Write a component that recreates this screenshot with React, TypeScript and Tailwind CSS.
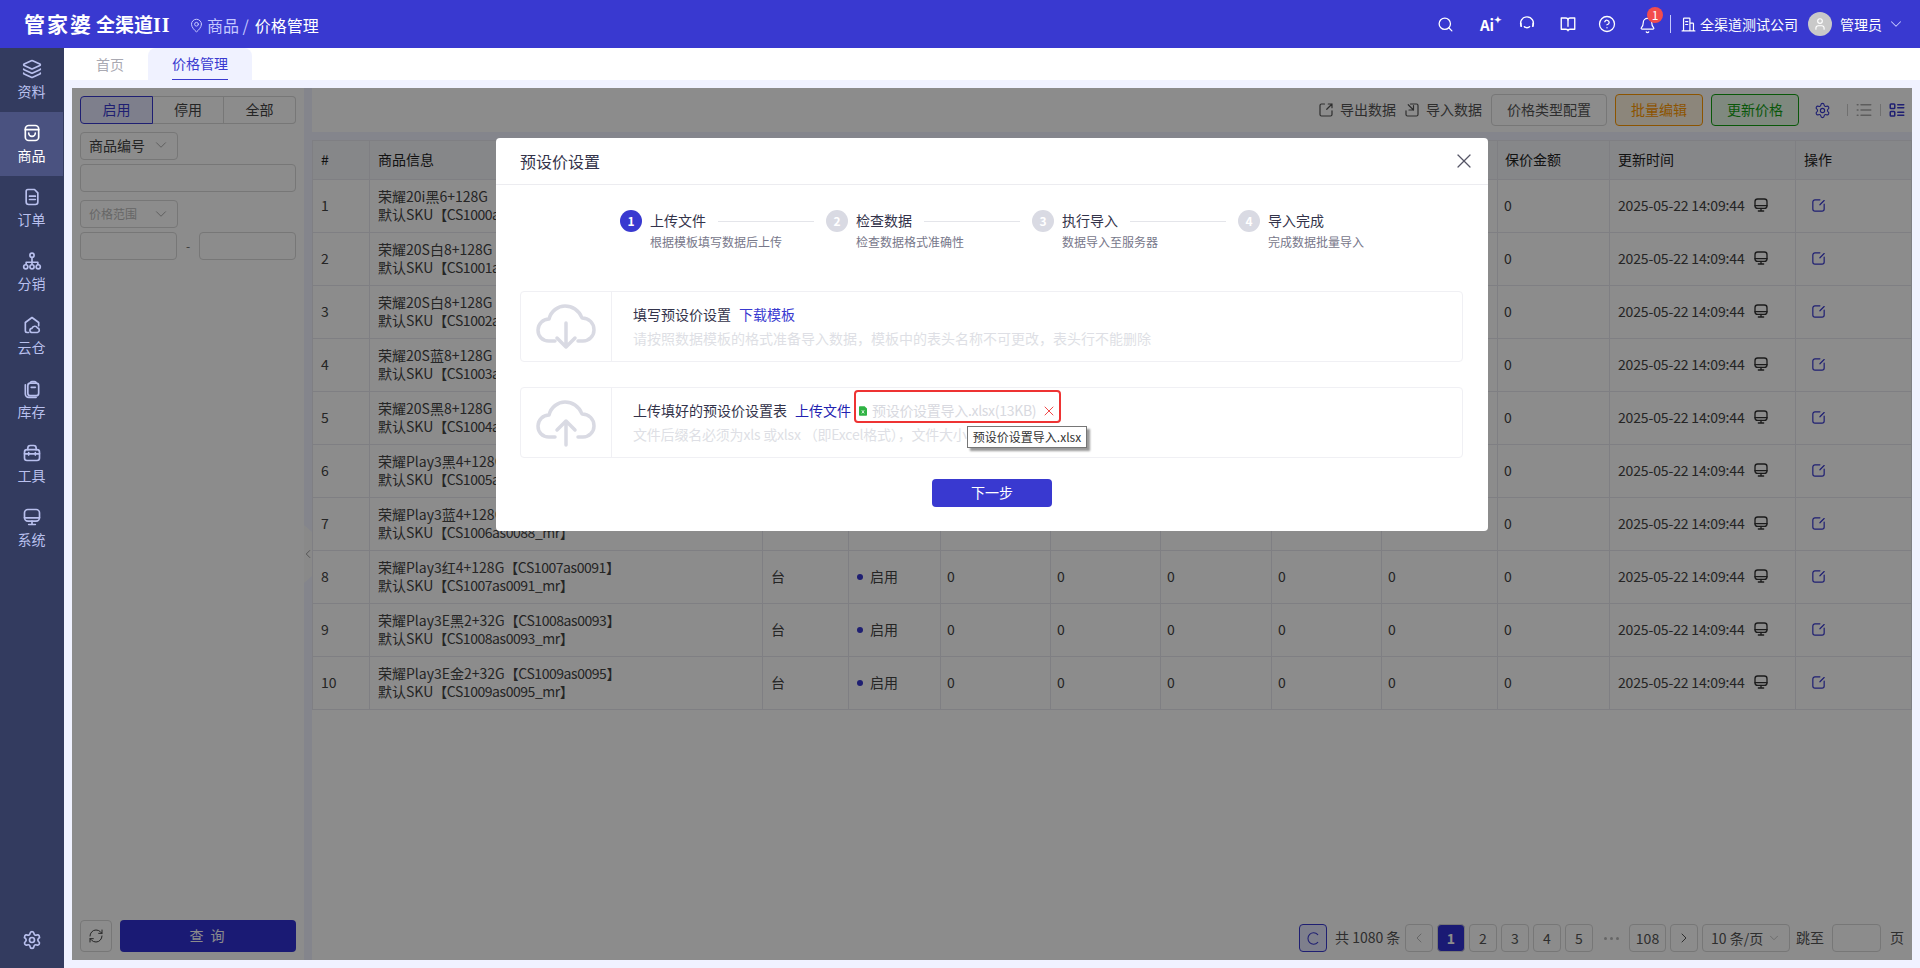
import React from "react";
import { Search, CircleHelp, Bell, ChevronDown, ChevronLeft, ChevronRight, Layers, RefreshCw, Settings, X, User, MapPin } from "lucide-react";

const Ic = ({ children, className = "w-5 h-5", sw = 2 }: { children: React.ReactNode; className?: string; sw?: number }) => (
  <svg viewBox="0 0 24 24" fill="none" stroke="currentColor" strokeWidth={sw} strokeLinecap="round" strokeLinejoin="round" className={className}>
    {children}
  </svg>
);

const GoodsIcon = () => (
  <Ic><rect x="4" y="3" width="16" height="18" rx="4" /><path d="M4 8h16" /><path d="M8 12c0 2.2 1.8 4 4 4s4-1.8 4-4" /></Ic>
);
const OrderIcon = () => (
  <Ic><path d="M7 3h8l4 4v11a3 3 0 0 1-3 3H8a3 3 0 0 1-3-3V5a2 2 0 0 1 2-2z" /><path d="M9 11h7M9 15h7" /></Ic>
);
const NetIcon = () => (
  <Ic><circle cx="12" cy="5" r="2.5" /><circle cx="4.5" cy="19" r="2.5" /><circle cx="12" cy="19" r="2.5" /><circle cx="19.5" cy="19" r="2.5" /><path d="M12 8v8M5 16v-2.5h14V16" /></Ic>
);
const CloudHouseIcon = () => (
  <Ic><path d="M8 21H6a2 2 0 0 1-2-2V9l8-6 8 6v4" /><path d="M12 21a2.5 2.5 0 0 1 0-5 3.5 3.5 0 0 1 6.5-.5A2.8 2.8 0 0 1 18.500 21z" /></Ic>
);
const StockIcon = () => (
  <Ic><rect x="7" y="5" width="13" height="15" rx="3" /><path d="M10 5a2 2 0 0 1 2-2h3a2 2 0 0 1 2 2" /><path d="M11 10h5" /><path d="M4 7v11a4 4 0 0 0 4 4h9" /></Ic>
);
const ToolIcon = () => (
  <Ic><rect x="3" y="8" width="18" height="13" rx="3" /><path d="M7 8V6a3 3 0 0 1 3-3h4a3 3 0 0 1 3 3v2" /><path d="M3 13h18M8 11.500v3M16 11.500v3" /></Ic>
);
const MonitorIcon = ({ className = "w-5 h-5" }: { className?: string }) => (
  <Ic className={className}><rect x="3" y="3" width="18" height="14" rx="4" /><path d="M3 13h18M12 17v4M8 21h8" /></Ic>
);
const EditIcon = () => (
  <Ic className="w-[17px] h-[17px]" sw={1.7}><path d="M14 4H7a3 3 0 0 0-3 3v10a3 3 0 0 0 3 3h10a3 3 0 0 0 3-3v-7" /><path d="M20 5l-6 6" /></Ic>
);

const sideItems: [string, React.ReactNode, boolean][] = [
  ["资料", <Layers key="a" className="w-5 h-5" strokeWidth={2} />, false],
  ["商品", <GoodsIcon key="b" />, true],
  ["订单", <OrderIcon key="c" />, false],
  ["分销", <NetIcon key="d" />, false],
  ["云仓", <CloudHouseIcon key="e" />, false],
  ["库存", <StockIcon key="f" />, false],
  ["工具", <ToolIcon key="g" />, false],
  ["系统", <MonitorIcon key="h" />, false],
];

const colW = ["w-[58px] border-l", "w-[393px]", "w-[86px]", "w-[92px]", "w-[110px]", "w-[110px]", "w-[111px]", "w-[110px]", "w-[116px]", "w-[112px]", "w-[186px]", "w-[116px]"];
const heads = ["#", "商品信息", "", "", "", "", "", "", "", "保价金额", "更新时间", "操作"];

const rows: [string, string][] = [
  ["荣耀20i黑6+128G", "CS1000as0066"],
  ["荣耀20S白8+128G", "CS1001as0071"],
  ["荣耀20S白8+128G", "CS1002as0073"],
  ["荣耀20S蓝8+128G", "CS1003as0075"],
  ["荣耀20S黑8+128G", "CS1004as0077"],
  ["荣耀Play3黑4+128G", "CS1005as0086"],
  ["荣耀Play3蓝4+128G", "CS1006as0088"],
  ["荣耀Play3红4+128G", "CS1007as0091"],
  ["荣耀Play3E黑2+32G", "CS1008as0093"],
  ["荣耀Play3E金2+32G", "CS1009as0095"],
];

const Cell = ({ i, children, className = "" }: { i: number; children?: React.ReactNode; className?: string }) => (
  <div className={`${colW[i]} shrink-0 border-r border-[#e8e8ee] pb-[2px] flex items-center ${className || "px-2"}`}>{children}</div>
);

const Step = ({ n, title, sub, last }: { n: number; title: string; sub: string; last?: boolean }) => (
  <div className="w-[206px] flex">
    <div className={`w-[22px] h-[22px] rounded-full flex items-center justify-center text-[12px] font-bold text-white shrink-0 ${n === 1 ? "bg-[#3939d0]" : "bg-[#d9dae3]"}`}>{n}</div>
    <div className="ml-2 flex-1">
      <div className="flex items-center h-[22px]">
        <span className="text-[14px] leading-[20px] pb-[2px] text-[#33334a]">{title}</span>
        {!last && <span className="ml-3 w-[96px] h-px bg-[#e4e5ea]" />}
      </div>
      <div className="text-[12px] leading-5 text-[#77778a] whitespace-nowrap">{sub}</div>
    </div>
  </div>
);

const PageBtn = ({ children, className = "" }: { children?: React.ReactNode; className?: string }) => (
  <div className={`h-7 min-w-7 rounded-[4px] border border-[#d9d9d9] flex items-center justify-center text-[14px] text-[#555] ${className}`}>{children}</div>
);

export default function App() {
  return (
    <div className="w-[1920px] h-[968px] overflow-hidden flex flex-col font-['Noto_Sans_CJK_SC','Noto_Sans',sans-serif] bg-[#f0f2ff]">
      <header className="h-12 shrink-0 bg-[#3939d0] flex items-center text-white">
        <div className="pl-6 flex items-baseline w-[189px] whitespace-nowrap font-bold">
          <span className="text-[21px] tracking-[2px]">管家婆</span>
          <span className="text-[19px] ml-[3px]">全渠道</span>
          <span className="text-[20px] font-['Liberation_Serif',serif] tracking-[1px]">II</span>
        </div>
        <div className="flex items-center text-[16px] whitespace-nowrap pt-[2px]">
          <MapPin className="w-[15px] h-[15px] text-[#c5c8ff] mr-[3px]" strokeWidth={1.6} />
          <span className="text-[#c5c8ff]">商品 /</span>
          <span className="ml-[6px]">价格管理</span>
        </div>
        <div className="ml-auto flex items-center h-full">
          <Search className="w-[17px] h-[17px] mr-[26px]" strokeWidth={1.8} />
          <div className="w-[16px] mr-[22px] flex items-start font-bold text-[15px] leading-none whitespace-nowrap">Ai<span className="text-[9px] -mt-[2px]">✦</span></div>
          <Ic className="w-[18px] h-[18px] mr-[23px]" sw={1.8}><path d="M4.500 15a8.500 8.500 0 1 1 15 0" /><path d="M4 11v4M20 11v4" /><path d="M8.500 15.500c1.200 2 5.800 2 7 0" /></Ic>
          <Ic className="w-[18px] h-[18px] mr-[21px]" sw={1.8}><path d="M3 4h6c1.500 0 3 1 3 2.500C12 5 13.500 4 15 4h6v15h-6c-1.500 0-3 .5-3 2 0-1.500-1.500-2-3-2H3z" /><path d="M12 6.500V15" /></Ic>
          <CircleHelp className="w-[18px] h-[18px] mr-[23px]" strokeWidth={1.7} />
          <div className="relative w-[16px] h-[16px] mr-[15px] mt-[2px]">
            <Bell className="w-[17px] h-[17px]" strokeWidth={1.7} />
            <span className="absolute -top-[10px] left-[8px] w-[16px] h-[16px] rounded-full bg-[#f24c4c] text-[12px] leading-4 text-center">1</span>
          </div>
          <span className="w-px h-[18px] bg-[#c5c8ff] mr-[9px]" />
          <Ic className="w-[17px] h-[17px] mr-[3px]" sw={1.7}><path d="M5 21V4a1 1 0 0 1 1-1h7a1 1 0 0 1 1 1v17M14 10h4a1 1 0 0 1 1 1v10M3 21h18M8 8h3M8 12h3" /></Ic>
          <span className="text-[14px] whitespace-nowrap">全渠道测试公司</span>
          <span className="ml-[10px] w-6 h-6 rounded-full bg-[#c9c9c9] flex items-center justify-center"><User className="w-[14px] h-[14px] text-white" /></span>
          <span className="ml-2 text-[14px]">管理员</span>
          <ChevronDown className="w-[18px] h-[18px] ml-[5px] mr-[15px] text-[#c5c8ff]" strokeWidth={1.4} />
        </div>
      </header>

      <div className="flex-1 flex min-h-0">
        <aside className="w-16 shrink-0 bg-[#333b5f] flex flex-col">
          {sideItems.map(([label, icon, active]) => (
            <div key={label} className={`h-16 w-[63px] flex flex-col items-center pt-[11px] ${active ? "bg-[#4a5280] text-white" : "text-[#b9c0ee]"}`}>
              {icon}
              <span className="text-[14px] leading-[20px] mt-[2px]">{label}</span>
            </div>
          ))}
          <div className="mt-auto mb-[18px] flex justify-center text-[#b9c0ee]">
            <Settings className="w-5 h-5" />
          </div>
        </aside>

        <div className="flex-1 flex flex-col min-w-0">
          <div className="h-8 shrink-0 bg-white flex">
            <div className="w-[84px] pl-2 flex items-center justify-center text-[14px] text-[#a9a9b2]">首页</div>
            <div className="w-[104px] bg-[#f0f2ff] rounded-t-[8px] flex justify-center">
              <span className="h-8 flex items-center text-[14px] text-[#3939d0] border-b-[1.500px] border-[#3939d0]">价格管理</span>
            </div>
          </div>

          <main className="relative flex-1 flex mt-2 mx-2 mb-2 min-h-0 text-[#333]">
            <section className="w-[232px] shrink-0 bg-white px-2 py-2 flex flex-col">
              <div className="flex h-7 text-[14px] rounded-[4px] text-[#444]">
                <div className="w-[73px] pb-[2px] flex items-center justify-center border border-[#3939d0] bg-[#e6e8ff] text-[#3939d0] rounded-l-[4px]">启用</div>
                <div className="w-[71px] pb-[2px] flex items-center justify-center border-y border-r border-[#d9d9d9]">停用</div>
                <div className="w-[72px] pb-[2px] flex items-center justify-center border-y border-r border-[#d9d9d9] rounded-r-[4px]">全部</div>
              </div>
              <div className="mt-2 w-[98px] h-7 pb-[2px] border border-[#d9d9d9] rounded-[4px] flex items-center pl-2 text-[14px] text-[#444]">商品编号<ChevronDown className="w-[18px] h-[18px] ml-auto mr-[7px] text-[#aaa]" strokeWidth={1.3} /></div>
              <div className="mt-1 h-7 border border-[#d9d9d9] rounded-[4px]" />
              <div className="mt-2 w-[98px] h-7 border border-[#d9d9d9] rounded-[4px] flex items-center pl-2 text-[12px] text-[#bbb]">价格范围<ChevronDown className="w-[18px] h-[18px] ml-auto mr-[7px] text-[#aaa]" strokeWidth={1.3} /></div>
              <div className="mt-1 flex items-center h-7">
                <div className="w-[97px] h-7 border border-[#d9d9d9] rounded-[4px]" />
                <span className="w-[22px] text-center text-[12px] text-[#666]">-</span>
                <div className="w-[97px] h-7 border border-[#d9d9d9] rounded-[4px]" />
              </div>
              <div className="mt-auto flex gap-2">
                <div className="w-8 h-8 border border-[#d9d9d9] rounded-[4px] flex items-center justify-center text-[#444]"><RefreshCw className="w-[16px] h-[16px]" strokeWidth={1.5} /></div>
                <div className="flex-1 h-8 pb-[1px] bg-[#3030d4] rounded-[4px] flex items-center justify-center text-white text-[14px] tracking-[2px]">查 询</div>
              </div>
            </section>

            <div className="relative w-2 shrink-0">
              <div className="absolute left-0 top-[437px] w-2 h-[58px] bg-[#fafafa] [clip-path:polygon(0_0,100%_12%,100%_88%,0_100%)] flex items-center justify-center text-[#888]"><ChevronLeft className="w-[14px] h-[14px] shrink-0" strokeWidth={1.4} /></div>
            </div>

            <section className="flex-1 flex flex-col min-w-0">
              <div className="h-[44px] shrink-0 bg-white flex items-center text-[14px] text-[#555] pl-[1005px] whitespace-nowrap">
                <Ic className="w-[18px] h-[18px]" sw={1.6}><path d="M10 4H6a2 2 0 0 0-2 2v12a2 2 0 0 0 2 2h12a2 2 0 0 0 2-2v-5" /><path d="M15 4h5v5M20 4l-7 7" /></Ic>
                <span className="ml-[5px] w-[56px] pb-[2px]">导出数据</span>
                <Ic className="w-[18px] h-[18px] ml-[7px]" sw={1.6}><path d="M10 4h8a2 2 0 0 1 2 2v12a2 2 0 0 1-2 2H6a2 2 0 0 1-2-2v-5" /><path d="M14 6v6H8M14 12L7 5" /></Ic>
                <span className="ml-[5px] w-[56px] pb-[2px]">导入数据</span>
                <div className="ml-[9px] w-[116px] h-8 pb-[2px] border border-[#d9d9d9] rounded-[4px] flex items-center justify-center">价格类型配置</div>
                <div className="ml-2 w-[88px] h-8 pb-[2px] border border-[#ff9900] bg-[#fff4e0] text-[#ff9900] rounded-[4px] flex items-center justify-center">批量编辑</div>
                <div className="ml-2 w-[88px] h-8 pb-[2px] border border-[#12a012] bg-[#e8f9e8] text-[#12a012] rounded-[4px] flex items-center justify-center">更新价格</div>
                <Settings className="w-[17px] h-[17px] ml-[15px] text-[#3939d0]" strokeWidth={1.6} />
                <span className="ml-4 w-px h-3 bg-[#ccc]" />
                <Ic className="w-[18px] h-[18px] ml-[7px] text-[#aaa]"><path d="M3 5h1M8 5h13M3 12h1M8 12h13M3 19h1M8 19h13" /></Ic>
                <span className="ml-[7px] w-px h-3 bg-[#ccc]" />
                <Ic className="w-[18px] h-[18px] ml-[7px] text-[#3939d0]"><rect x="3" y="4" width="6" height="6" rx="1" /><rect x="3" y="14" width="6" height="6" rx="1" /><path d="M13 5h8M13 9h8M13 15h8M13 19h8" /></Ic>
              </div>
              <div className="h-2 shrink-0" />
              <div className="flex-1 bg-white relative min-h-0 flex flex-col">
                <div className="flex h-10 border-y border-[#e8e8ee] bg-[#f5f6fa] text-[14px] text-[#222]">
                  {heads.map((h, i) => (<Cell key={i} i={i} className={i === 9 ? "pl-[7px]" : "px-2"}>{h}</Cell>))}
                </div>
                {rows.map(([name, code], r) => (
                  <div key={code} className="flex h-[53px] border-b border-[#e8e8ee] text-[14px] text-[#444]">
                    <Cell i={0}>{r + 1}</Cell>
                    <Cell i={1}>
                      <div className="leading-[18px] text-[14px] whitespace-nowrap">
                        <div>{name}<span className="tracking-[-0.45px]">【{code}】</span></div>
                        <div>默认SKU<span className="tracking-[-0.45px]">【{code}_mr】</span></div>
                      </div>
                    </Cell>
                    <Cell i={2}>台</Cell>
                    <Cell i={3}><span className="w-[6px] h-[6px] rounded-full bg-[#3939d0] mr-[7px] mt-[2px]" />启用</Cell>
                    {[4, 5, 6, 7, 8, 9].map((c) => (<Cell key={c} i={c} className="pl-[6px]">0</Cell>))}
                    <Cell i={10}><span className="tracking-[-0.15px]">2025-05-22 14:09:44</span><MonitorIcon className="w-[16px] h-[16px] ml-[8px] text-[#333]" /></Cell>
                    <Cell i={11} className="pl-[14px] text-[#3939d0]"><EditIcon /></Cell>
                  </div>
                ))}
                <div className="mt-auto mb-2 mr-2 flex items-center justify-end gap-1 whitespace-nowrap text-[14px] text-[#555]">
                  <div className="w-7 h-7 rounded-[4px] border border-[#3939d0] bg-[#e6e8ff] flex items-center justify-center text-[#3939d0]"><Ic className="w-[17px] h-[17px]" sw={1.5}><path d="M18 6.500a8 8 0 1 0 0 11" /></Ic></div>
                  <span className="ml-1 w-[66px] pb-[1px]">共 1080 条</span>
                  <PageBtn className="text-[#bbb]"><ChevronLeft className="w-[16px] h-[16px]" strokeWidth={1.5} /></PageBtn>
                  <PageBtn className="bg-[#3030d4] border-[#3030d4] text-white font-bold">1</PageBtn>
                  <PageBtn>2</PageBtn>
                  <PageBtn>3</PageBtn>
                  <PageBtn>4</PageBtn>
                  <PageBtn>5</PageBtn>
                  <div className="w-7 flex items-center justify-center gap-[3px]">
                    <span className="w-[3px] h-[3px] rounded-full bg-[#bbb]" />
                    <span className="w-[3px] h-[3px] rounded-full bg-[#bbb]" />
                    <span className="w-[3px] h-[3px] rounded-full bg-[#bbb]" />
                  </div>
                  <PageBtn className="w-[37px]">108</PageBtn>
                  <PageBtn><ChevronRight className="w-[16px] h-[16px]" strokeWidth={1.5} /></PageBtn>
                  <PageBtn className="w-[88px] justify-start pl-2">10 条/页<ChevronDown className="w-[14px] h-[14px] ml-1 text-[#bbb]" strokeWidth={1.4} /></PageBtn>
                  <span className="ml-[2px] pb-[1px]">跳至</span>
                  <PageBtn className="w-[49px] ml-1" />
                  <span className="ml-[5px] pb-[1px]">页</span>
                </div>
              </div>
            </section>

            <div className="absolute inset-0 bg-black/45 flex justify-center items-start pt-[50px]">
              <div className="w-[992px] h-[393px] bg-white rounded-[4px] text-[#33334a]">
                <div className="h-[47px] border-b border-[#ececf0] flex items-center justify-between pl-6 pr-3">
                  <span className="text-[16px]">预设价设置</span>
                  <X className="w-6 h-6 text-[#555566]" strokeWidth={1.2} />
                </div>
                <div className="flex pl-[124px] pt-[25px]">
                  <Step n={1} title="上传文件" sub="根据模板填写数据后上传" />
                  <Step n={2} title="检查数据" sub="检查数据格式准确性" />
                  <Step n={3} title="执行导入" sub="数据导入至服务器" />
                  <Step n={4} title="导入完成" sub="完成数据批量导入" last />
                </div>
                <div className="mt-[39px] mx-6 w-[943px] h-[71px] border border-[#f0f0f4] rounded-[4px] flex">
                  <div className="w-[91px] border-r border-[#f0f0f4] flex items-center justify-center text-[#d9dae3]">
                    <svg viewBox="0 0 60 48" className="w-[60px] h-[48px]" fill="none" stroke="currentColor" strokeWidth={3.500} strokeLinecap="round" strokeLinejoin="round">
                      <path d="M19 38h-6C6 38 2 33 2 27c0-6 5-11 11-11 2-8 9-13 16-13s14 4 17 12c7 0 12 5 12 12 0 6-5 11-11 11h-5" />
                      <path d="M30 20v24M21 35l9 9 9-9" />
                    </svg>
                  </div>
                  <div className="pl-[21px] pt-[10px] text-[14px] leading-[24px]">
                    <div>填写预设价设置<span className="ml-2 text-[#3939d0]">下载模板</span></div>
                    <div className="text-[#dedfe5]">请按照数据模板的格式准备导入数据，模板中的表头名称不可更改，表头行不能删除</div>
                  </div>
                </div>
                <div className="relative mt-[25px] mx-6 w-[943px] h-[71px] border border-[#f0f0f4] rounded-[4px] flex">
                  <div className="w-[91px] border-r border-[#f0f0f4] flex items-center justify-center text-[#d9dae3]">
                    <svg viewBox="0 0 60 48" className="w-[60px] h-[48px]" fill="none" stroke="currentColor" strokeWidth={3.500} strokeLinecap="round" strokeLinejoin="round">
                      <path d="M19 38h-6C6 38 2 33 2 27c0-6 5-11 11-11 2-8 9-13 16-13s14 4 17 12c7 0 12 5 12 12 0 6-5 11-11 11h-5" />
                      <path d="M30 46V22M21 31l9-9 9 9" />
                    </svg>
                  </div>
                  <div className="pl-[21px] pt-[10px] text-[14px] leading-[24px] whitespace-nowrap">
                    <div className="flex items-center">
                      上传填好的预设价设置表
                      <span className="ml-2 text-[#2222b0]">上传文件</span>
                      <svg viewBox="0 0 10 12" className="ml-[8px] w-[8px] h-[10px] mt-[2px]"><path d="M0 1a1 1 0 0 1 1-1h6l3 3v8a1 1 0 0 1-1 1H1a1 1 0 0 1-1-1z" fill="#2fb344" /><path d="M3.500 5l3 4M6.500 5l-3 4" stroke="#fff" strokeWidth="1" /></svg>
                      <span className="ml-[5px] text-[#d8d9e0] tracking-[-0.3px]">预设价设置导入.xlsx(13KB)</span>
                      <X className="ml-[5px] w-[16px] h-[16px] text-[#f04a4a] mt-[1px]" strokeWidth={1.5} />
                    </div>
                    <div className="text-[#dedfe5] tracking-[-0.2px]">文件后缀名必须为xls 或xlsx （即Excel格式），文件大小</div>
                  </div>
                  <div className="absolute left-[333px] top-[2px] w-[207px] h-[33px] border-2 border-[#ee3333] rounded-[4px]" />
                  <div className="absolute left-[446px] top-[38px] w-[120px] h-[22px] bg-white border border-[#767676] shadow-[3px_3px_2px_#999] text-[12px] leading-[20px] text-[#333] text-center whitespace-nowrap">预设价设置导入.xlsx</div>
                </div>
                <div className="mt-[21px] flex justify-center">
                  <div className="w-[120px] h-7 pb-[1px] rounded-[4px] bg-[#3939d0] text-white text-[14px] flex items-center justify-center">下一步</div>
                </div>
              </div>
            </div>
          </main>
        </div>
      </div>
    </div>
  );
}
